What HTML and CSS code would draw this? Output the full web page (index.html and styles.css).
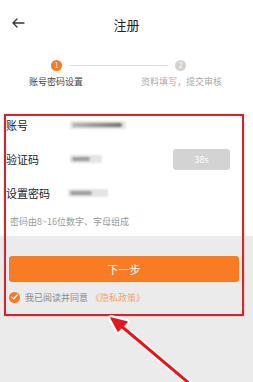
FILE: index.html
```html
<!DOCTYPE html>
<html lang="zh-CN">
<head>
<meta charset="UTF-8">
<title>注册</title>
<link rel="stylesheet" href="styles.css">
</head>
<body>
<div class="page">
  <header class="topbar">
    <svg class="back" width="14" height="12" viewBox="0 0 14 12">
      <path d="M13 6H2M6 2L2 6L6 10" fill="none" stroke="#333" stroke-width="1.3" stroke-linecap="round" stroke-linejoin="round"/>
    </svg>
    <h1>注册</h1>
  </header>

  <div class="steps">
    <div class="track">
      <span class="dot on">1</span>
      <span class="bar"></span>
      <span class="dot">2</span>
    </div>
    <div class="labels">
      <span class="lbl on">账号密码设置</span>
      <span class="lbl">资料填写，提交审核</span>
    </div>
  </div>

  <div class="form">
    <div class="row">
      <span class="key">账号</span>
      <span class="val w1"><i></i></span>
    </div>
    <div class="row">
      <span class="key">验证码</span>
      <span class="val w2"><i></i></span>
      <button class="code-btn">38s</button>
    </div>
    <div class="row">
      <span class="key">设置密码</span>
      <span class="val w3"><i></i></span>
    </div>
    <p class="hint">密码由8~16位数字、字母组成</p>
  </div>

  <div class="actions">
    <button class="next-btn">下一步</button>
    <div class="agree">
      <span class="check">
        <svg width="7" height="6" viewBox="0 0 7 6"><path d="M0.8 3.1L2.7 4.9L6.2 1" fill="none" stroke="#fff" stroke-width="1.3" stroke-linecap="round" stroke-linejoin="round"/></svg>
      </span>
      <span>我已阅读并同意</span><span class="link">《隐私政策》</span>
    </div>
  </div>

  <!-- annotation layer -->
  <div class="mark-box"></div>
  <svg class="mark-arrow" width="253" height="382" viewBox="0 0 253 382">
    <g stroke="#fff" stroke-width="6" stroke-linecap="round" opacity="0.8" fill="#fff">
      <path d="M190 384L120 325"/>
      <path d="M111 318L127 322L118 331Z" stroke-linejoin="round"/>
    </g>
    <g stroke="#e3171d" stroke-width="3" stroke-linecap="round" fill="#e3171d">
      <path d="M190 384L120 325"/>
      <path d="M111 318L127 322L118 331Z" stroke-width="1.5" stroke-linejoin="round"/>
    </g>
  </svg>
</div>
</body>
</html>
```

FILE: styles.css
```css
*{ box-sizing: border-box; }
html,body{
  margin:0; padding:0; background:#ebebeb;
  font-family: "Noto Sans CJK SC", "Noto Sans", sans-serif;
}
.page{ position: relative; width: 253px; height: 382px; overflow: hidden; }

.topbar{
  background:#fff; height: 46px; display:flex; align-items:center; justify-content:center;
  position: relative;
}
.topbar .back{ position:absolute; left: 11px; top: 17px; }
.topbar h1{ margin:0; font-size: 13px; font-weight: 400; color:#222; padding-top: 2px; }

.steps{ background:#fff; height: 62px; padding-top: 14px; }
.track{ display:flex; align-items:center; padding: 0 67px 0 51px; }
.dot{
  width:11px; height:11px; border-radius:50%; background:#d2d2d2; color:#fff;
  font-size:7px; line-height:11px; text-align:center; flex-shrink:0;
}
.dot.on{ background:#f47a23; }
.bar{ flex:1; height:1px; background:#e2e2e2; margin: 0 7px; }
.labels{ display:flex; justify-content:space-between; padding: 0 32px 0 16px; margin-top: 4px; }
.lbl{ width: 80px; text-align:center; font-size: 9px; color:#aaa; white-space:nowrap; }
.lbl.on{ color:#444; }

.form{ background:#fff; padding: 0 0 0 6px; }
.row{ height: 34px; display:flex; align-items:center; }
.key{ width: 60px; font-size: 11px; color:#222; }
.val{
  height: 8px; background:#e4e4e4; filter: blur(1px); border-radius: 1px;
  display:flex; align-items:center; padding-left: 2px;
}
.val i{ display:block; height: 4px; background:#9c9c9c; border-radius: 2px; }
.val.w1{ width: 56px; margin-left: 4px; }
.val.w1 i{ width: 50px; background: linear-gradient(90deg,#b5b5b5,#8c8c8c 60%,#6e6e6e); }
.val.w2{ width: 32px; margin-left: 4px; }
.val.w2 i{ width: 18px; }
.val.w3{ width: 40px; margin-left: 2px; }
.val.w3 i{ width: 22px; }
.code-btn{
  margin-left: auto; margin-right: 23px; width: 57px; height: 21px; border:0; border-radius: 3px;
  background:#d3d3d3; color:#fff; font-family: inherit; font-size: 9px; padding:0;
}
.hint{ margin:0; height: 26px; line-height: 24px; padding-left: 4px; font-size: 9px; color:#9a9a9a; }

.actions{ padding: 20px 14px 0 9px; }
.next-btn{
  display:block; width:100%; height: 26px; border:0; border-radius: 3px;
  background:#f97c24; color:#fff; font-family: inherit; font-size: 11px; padding:0;
}
.agree{ display:flex; align-items:center; margin-top: 9px; font-size: 9px; color:#8a8a8a; height: 12px; }
.check{
  width: 11px; height: 11px; border-radius:50%; background:#f47a23; margin-right: 5px;
  display:inline-flex; align-items:center; justify-content:center;
}
.agree .link{ color:#f5a36b; margin-left: 3px; }

.mark-box{
  position:absolute; left: 4px; top: 114px; width: 240px; height: 202px;
  border: 2.5px solid #d9222b; box-shadow: 0 0 1px rgba(217,34,43,0.5);
}
.mark-arrow{ position:absolute; left:0; top:0; }
```
